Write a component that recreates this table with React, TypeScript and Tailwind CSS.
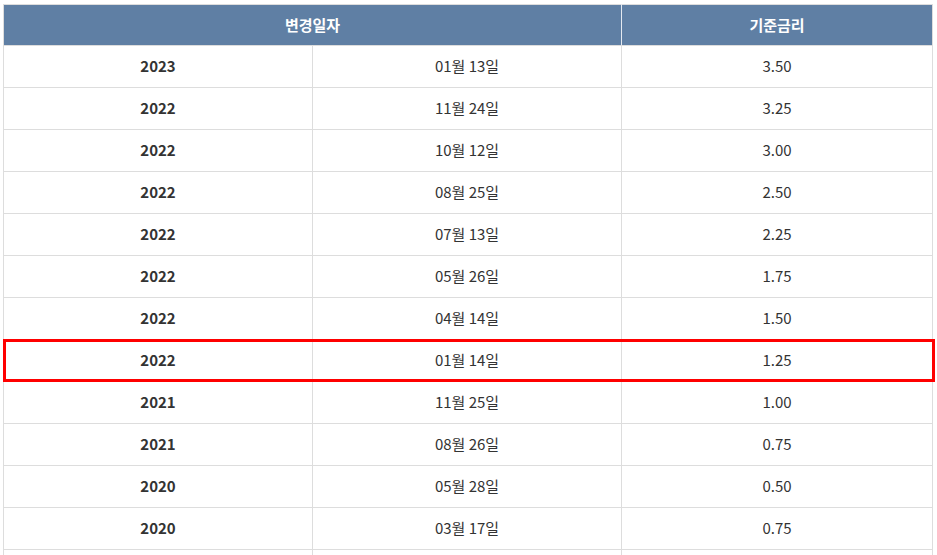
const rows: [string, string, string][] = [
  ['2023', '01월 13일', '3.50'],
  ['2022', '11월 24일', '3.25'],
  ['2022', '10월 12일', '3.00'],
  ['2022', '08월 25일', '2.50'],
  ['2022', '07월 13일', '2.25'],
  ['2022', '05월 26일', '1.75'],
  ['2022', '04월 14일', '1.50'],
  ['2022', '01월 14일', '1.25'],
  ['2021', '11월 25일', '1.00'],
  ['2021', '08월 26일', '0.75'],
  ['2020', '05월 28일', '0.50'],
  ['2020', '03월 17일', '0.75'],
  ['', '', ''],
];

export default function App() {
  return (
    <div
      className="h-[555px] w-[937px] overflow-hidden bg-white pl-[3px] pt-[4px]"
      style={{ fontFamily: '"Noto Sans CJK KR", "Noto Sans", sans-serif' }}
    >
      <div className="relative w-[929px]">
        <table className="w-[929px] table-fixed border-collapse text-[15px] text-[#333]">
          <colgroup>
            <col className="w-[309px]" />
            <col className="w-[309px]" />
            <col className="w-[311px]" />
          </colgroup>
          <thead>
            <tr className="h-[41px] bg-[#5f7fa4] text-white">
              <th colSpan={2} className="border border-[#ddd] border-r-[#e4e9f0] font-bold">
                변경일자
              </th>
              <th className="border border-[#ddd] font-bold">기준금리</th>
            </tr>
          </thead>
          <tbody>
            {rows.map(([year, date, rate], i) => (
              <tr key={i} className="h-[42px]">
                <td className="border border-[#ddd] text-center font-bold">{year}</td>
                <td className="border border-[#ddd] text-center">{date}</td>
                <td className="border border-[#ddd] text-center">{rate}</td>
              </tr>
            ))}
          </tbody>
        </table>
        <div className="absolute left-0 top-[335px] h-[43px] w-[932px] border-[3px] border-[#ff0000]" />
      </div>
    </div>
  );
}
